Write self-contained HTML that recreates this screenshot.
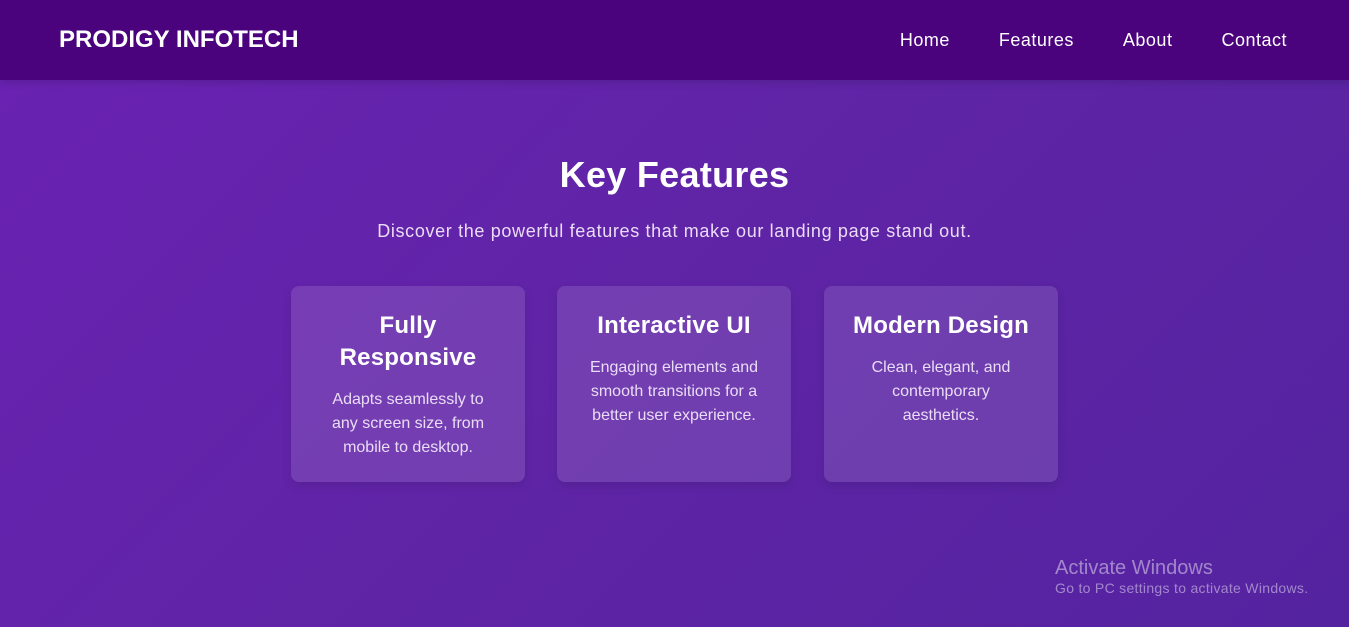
<!DOCTYPE html>
<html><head><style>
*{margin:0;padding:0;box-sizing:border-box}
body{width:1349px;height:627px;overflow:hidden;font-family:"Liberation Sans",sans-serif;background:linear-gradient(135deg,#6a22b2 0%,#5f24a6 50%,#5423a0 100%);color:#fff;position:relative}
header{height:80px;background:#4a037d;display:flex;align-items:center;justify-content:space-between;padding:0 62px 0 59px;box-shadow:0 2px 8px rgba(0,0,0,.15)}
.logo{font-weight:bold;font-size:24px;letter-spacing:0}
nav a{color:#fff;text-decoration:none;font-size:18px;margin-left:49px;letter-spacing:.5px}
h1{position:absolute;top:154px;width:100%;text-align:center;font-size:36px;font-weight:bold;letter-spacing:.3px}
.sub{position:absolute;top:221px;width:100%;text-align:center;font-size:18px;color:#eadcf6;letter-spacing:.65px}
.card{position:absolute;top:286px;width:234px;height:196px;background:rgba(255,255,255,.12);border-radius:8px;text-align:center;padding:24px 30px;box-shadow:0 4px 10px rgba(0,0,0,.1)}
.card h3{font-size:24px;line-height:32px;font-weight:bold;margin:0 -20px 14px;letter-spacing:.2px}
.card p{font-size:16px;line-height:24px;color:#eadcf6;letter-spacing:0}
.win{position:absolute;left:1055px;top:557px;color:rgba(255,255,255,.45)}
.win b{font-weight:normal;font-size:20px;display:block}
.win span{font-size:14px;letter-spacing:.3px}
</style></head><body>
<header><div class="logo">PRODIGY INFOTECH</div><nav><a>Home</a><a>Features</a><a>About</a><a>Contact</a></nav></header>
<h1>Key Features</h1>
<div class="sub">Discover the powerful features that make our landing page stand out.</div>
<div class="card" style="left:291px"><h3>Fully<br>Responsive</h3><p>Adapts seamlessly to<br>any screen size, from<br>mobile to desktop.</p></div>
<div class="card" style="left:557px"><h3>Interactive UI</h3><p>Engaging elements and<br>smooth transitions for a<br>better user experience.</p></div>
<div class="card" style="left:824px"><h3>Modern Design</h3><p>Clean, elegant, and<br>contemporary<br>aesthetics.</p></div>
<div class="win"><b>Activate Windows</b><span>Go to PC settings to activate Windows.</span></div>
</body></html>
